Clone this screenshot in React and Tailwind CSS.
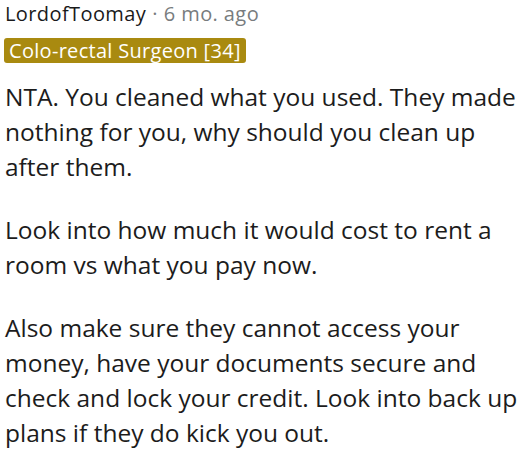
export default function App() {
  return (
    <div className="w-[524px] h-[463px] bg-white overflow-hidden pl-[5px] pr-[2px]" style={{ fontFamily: '"Open Sans", "Noto Sans", sans-serif' }}>
      <div className="flex items-center h-[28px] text-[20px] leading-[28px] tracking-[0.4px]">
        <span className="text-[#1a1a1b]">LordofToomay</span>
        <span className="text-[#787c7e] ml-[6px]">·</span>
        <span className="text-[#787c7e] ml-[6px]">6 mo. ago</span>
      </div>
      <div className="mt-[10px] flex -ml-[1px]">
        <span className="bg-[#a98a10] text-white text-[20px] leading-[25px] tracking-[0.3px] px-[5px] rounded-[3px]">Colo-rectal Surgeon [34]</span>
      </div>
      <div className="mt-[16px] text-[24.5px] leading-[35px] text-[#1c1c1c]">
        <p>NTA. You cleaned what you used. They made nothing for you, why should you clean up after them.</p>
        <p className="mt-[28px]">Look into how much it would cost to rent a room vs what you pay now.</p>
        <p className="mt-[28px]">Also make sure they cannot access your money, have your documents secure and check and lock your credit. Look into back up plans if they do kick you out.</p>
      </div>
    </div>
  );
}
